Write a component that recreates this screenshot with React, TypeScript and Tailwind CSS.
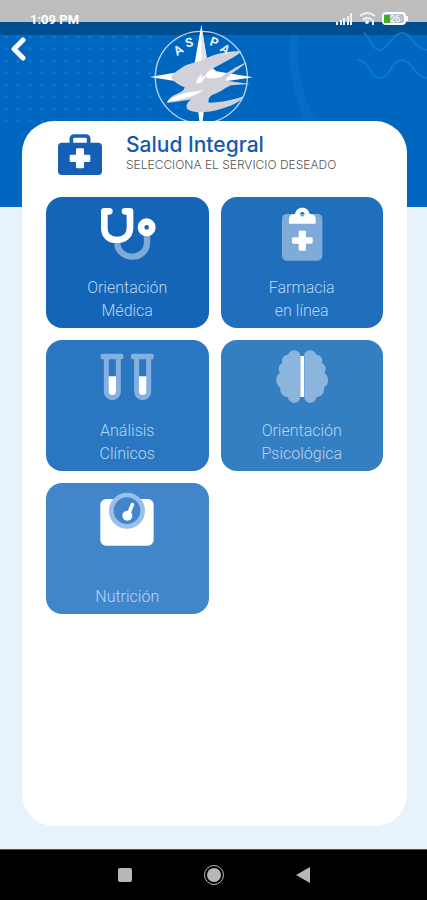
import type { ReactNode } from 'react'

interface Service {
  id: string
  lines: string[]
  color: string
  icon: ReactNode
}

const SERVICES: Service[] = [
  { id: 'medica', lines: ['Orientación', 'Médica'], color: 'bg-[#1465b8]', icon: <StethoscopeIcon /> },
  { id: 'farmacia', lines: ['Farmacia', 'en línea'], color: 'bg-[#1f6fbc]', icon: <ClipboardIcon /> },
  { id: 'analisis', lines: ['Análisis', 'Clínicos'], color: 'bg-[#2a76c0]', icon: <TubesIcon /> },
  { id: 'psicologica', lines: ['Orientación', 'Psicológica'], color: 'bg-[#347ec2]', icon: <BrainIcon /> },
  { id: 'nutricion', lines: ['Nutrición'], color: 'bg-[#4186ca]', icon: <ScaleIcon /> },
]

function StethoscopeIcon() {
  return (
    <svg viewBox="171 42 180 180" className="size-[60px]" fill="none" aria-hidden="true">
      <path d="M232 160c0 22 20 40 45 40s44-18 44-42v-22" stroke="#7ea9d8" strokeWidth="19" />
      <path
        d="M208 64h-15v50c0 24 16 36 37 36s40-12 40-36V64h-15"
        stroke="white"
        strokeWidth="20"
        strokeLinecap="round"
        strokeLinejoin="round"
      />
      <circle cx="320" cy="112" r="17" stroke="white" strokeWidth="20" />
    </svg>
  )
}

function ClipboardIcon() {
  return (
    <svg viewBox="168 42 180 180" className="size-[60px]" aria-hidden="true">
      <rect x="198" y="72" width="121" height="140" rx="14" fill="#7fabd9" />
      <path
        fill="white"
        fillRule="evenodd"
        d="M219 101V88q0-16 17-16h1c2-12 10-19 22-19s20 7 22 19h1q17 0 17 16v13zM259 66a7 7 0 1 0 0 14a7 7 0 1 0 0-14z"
      />
      <path
        fill="white"
        d="M252 122h14q4 0 4 4v16h16q4 0 4 4v11q0 4-4 4h-16v17q0 4-4 4h-14q-4 0-4-4v-17h-16q-4 0-4-4v-11q0-4 4-4h16v-16q0-4 4-4z"
      />
    </svg>
  )
}

function TubesIcon() {
  return (
    <svg viewBox="171 36 180 180" className="size-[60px]" aria-hidden="true">
      {[0, 91].map((x) => (
        <g key={x} transform={`translate(${x} 0)`}>
          <rect x="182" y="56" width="68" height="17" rx="5" fill="#84b1e0" />
          <path d="M199 68v102a18 18 0 0 0 36 0V68" fill="none" stroke="#84b1e0" strokeWidth="15" />
          <path d="M206 124h22v46q0 10-11 10t-11-10z" fill="white" />
        </g>
      ))}
    </svg>
  )
}

function BrainIcon() {
  const half =
    'M252 56c-8-15-31-14-36 3c-13 0-20 11-17 24c-12 7-14 21-7 31c-15 9-16 35 1 44c-2 15 7 27 22 28c4 20 31 25 37 4z'
  return (
    <svg viewBox="168 36 180 180" className="size-[60px]" fill="#8cb5de" aria-hidden="true">
      <path d={half} />
      <path d={half} transform="translate(517 0) scale(-1 1)" />
      <rect x="253" y="63" width="11" height="123" fill="white" />
    </svg>
  )
}

function ScaleIcon() {
  return (
    <svg viewBox="171 45 180 180" className="size-[60px]" aria-hidden="true">
      <rect x="181" y="72" width="160" height="140" rx="17" fill="white" />
      <circle cx="261" cy="107" r="47" fill="#4186ca" stroke="#9bbfe8" strokeWidth="14" />
      <path d="M264 121l13-32" stroke="white" strokeWidth="11" strokeLinecap="round" />
      <circle cx="262" cy="122" r="15" fill="white" />
    </svg>
  )
}

function MedkitIcon() {
  return (
    <svg viewBox="0 0 132 123" className="h-[41px] w-11 shrink-0" aria-hidden="true">
      <path d="M40 28V15q0-9 9-9h34q9 0 9 9v13" fill="none" stroke="#1560b5" strokeWidth="11" />
      <rect y="26" width="132" height="97" rx="12" fill="#1560b5" />
      <path
        fill="white"
        d="M58 43h16q4 0 4 4v15h15q4 0 4 4v14q0 4-4 4H78v15q0 4-4 4H58q-4 0-4-4V84H39q-4 0-4-4V66q0-4 4-4h15V47q0-4 4-4z"
      />
    </svg>
  )
}

function AspaLogo() {
  return (
    <svg viewBox="27 12 315 291" className="h-[97px] w-[105px]" role="img" aria-label="ASPA">
      <circle cx="184" cy="172" r="138" fill="none" stroke="#b9d3ee" strokeWidth="4" />
      {/* Compass star */}
      <path d="M184 14l19 118l26 22l110 18l-112 16l-28 20l-11 95h-10l-11-95l-30-20l-108-17l102-17l32-20z" fill="white" />
      <path d="M184 14l19 118l-19 8z" fill="#dfe2ea" />
      {/* Birds */}
      <g fill="#d0d1d9">
        <path d="M305 94C268 94 232 99 200 114C176 128 150 128 132 139C116 149 102 158 93 171C98 181 112 194 134 202C132 212 124 216 110 222C96 227 86 236 80 248C112 246 142 239 152 239C140 248 134 262 146 270C170 282 206 277 240 268C272 258 298 248 313 228C284 238 246 248 206 248C204 240 206 232 216 225C240 218 254 204 274 196L330 192L270 184L256 181C270 160 298 148 320 127C296 136 270 152 250 167C240 160 226 154 210 150C242 132 280 116 305 94Z" />
      </g>
      <path d="M172 176l14-17l-2 14l14 -8l-12 22l-18 4z" fill="white" />
      <path d="M210 151c16 2 30 8 40 16c-16 9-34 10-50 6c-8-4-2-14 10-22z" fill="white" />
      <path d="M82 246c20-24 66-30 108-35c-26 20-68 29-108 35z" fill="white" />
      <g fill="#e8f1fa" fontSize="38" textAnchor="middle" className="font-['Roboto',sans-serif] font-bold">
        <text transform="translate(122 101) rotate(-32)">A</text>
        <text transform="translate(151 80) rotate(-15)">S</text>
        <text transform="translate(219 79) rotate(18)">P</text>
        <text transform="translate(248 98) rotate(34)">A</text>
      </g>
    </svg>
  )
}

function HeroPattern() {
  return (
    <svg className="absolute inset-0 size-full" aria-hidden="true">
      <defs>
        <pattern id="dots" y="7" width="12" height="12" patternUnits="userSpaceOnUse">
          <circle cx="6" cy="6" r="2" fill="#0a73cb" />
        </pattern>
      </defs>
      <rect y="35" width="156" height="96" fill="url(#dots)" />
      <path d="M294 35c-3 32 4 62 19 92" fill="none" stroke="#056dc6" strokeWidth="9" />
    </svg>
  )
}

function Waves() {
  return (
    <svg
      viewBox="0 0 72 60"
      className="absolute top-6 right-0 h-[60px] w-[72px]"
      fill="none"
      stroke="#0a7ad0"
      strokeWidth="2"
      strokeLinecap="round"
      aria-hidden="true"
    >
      <path d="M9 9c6 4 8 17 16 17S37 9 47 9s12 16 25 17" />
      <path d="M3 36c11 0 12 18 22 18s12-18 22-18s12 17 25 18" />
    </svg>
  )
}

function StatusBar() {
  return (
    <div className="relative flex h-[35px] items-start justify-between bg-[linear-gradient(to_bottom,#bdbdbd_22px,#004f93_22px)] pt-3 pr-[19px] pl-[30px] font-['Roboto',sans-serif] text-white">
      <span className="text-[13px] leading-4 font-bold">1:09 PM</span>
      <div className="flex items-center gap-[6px]">
        <svg viewBox="0 0 17 12" className="h-3 w-[17px]" fill="#eef2f5" aria-hidden="true">
          <path d="M0 9h2v3H0zM4 7h2v5H4zM7 5h2v7H7zM11 3h2v9h-2zM14 0h2v12h-2z" />
        </svg>
        <svg viewBox="0 0 17 13" className="h-[13px] w-[17px]" fill="none" stroke="#eef2f5" strokeWidth="2" aria-hidden="true">
          <path d="M1 4q7-6 15 0M4 8q4-4 9 0" />
          <circle cx="8" cy="10" r="1" fill="#eef2f5" />
          <path d="M14 8v5" />
        </svg>
        <svg viewBox="0 0 26 13" className="h-[13px] w-[26px]" aria-hidden="true">
          <rect x="1" y="1" width="22" height="11" rx="3" fill="#b5c4cf" stroke="white" strokeWidth="2" />
          <path d="M24 4h2v5h-2z" fill="white" />
          <path d="M2 3h6v8H2z" fill="#3fae1e" />
          <text x="8" y="10" fontSize="9" fill="white">
            26
          </text>
        </svg>
      </div>
    </div>
  )
}

function ServiceCard({ service }: { service: Service }) {
  return (
    <button
      type="button"
      className={`flex h-[131px] cursor-pointer flex-col items-center justify-between rounded-2xl pt-[7px] pb-[6px] ${service.color}`}
    >
      {service.icon}
      <span className="font-['Roboto',sans-serif] text-base leading-[23px] font-light text-[#b9d6f2]">
        {service.lines.map((line) => (
          <span key={line} className="block">
            {line}
          </span>
        ))}
      </span>
    </button>
  )
}

export default function App() {
  return (
    <div className="flex min-h-screen flex-col bg-[#e8f2fb]">
      {/* Hero */}
      <header className="relative h-[207px] overflow-hidden bg-[#0067c0]">
        <HeroPattern />
        <StatusBar />
        <Waves />
        <button type="button" aria-label="Volver" className="relative ml-[10px] block cursor-pointer pt-[2px]">
          <svg viewBox="0 0 16 24" className="h-6 w-4" fill="none" stroke="white" strokeWidth="5" aria-hidden="true">
            <path d="M13 3L4 12l9 9" strokeLinecap="round" strokeLinejoin="round" />
          </svg>
        </button>
        <div className="absolute inset-x-0 top-6 flex justify-center pr-6">
          <AspaLogo />
        </div>
      </header>

      {/* Panel */}
      <main className="relative mr-5 -mt-[86px] mb-[23px] ml-[22px] flex-1 rounded-[32px] bg-white px-6 pt-3">
        <div className="flex items-start gap-6 pl-3">
          <div className="pt-px">
            <MedkitIcon />
          </div>
          <div>
            <h1 className="font-['Inter',sans-serif] text-[21px] leading-6 font-medium text-[#1459b0]">Salud Integral</h1>
            <p className="font-['Inter',sans-serif] text-xs leading-4 font-light text-[#555555]">
              SELECCIONA EL SERVICIO DESEADO
            </p>
          </div>
        </div>
        <div className="mt-[22px] grid grid-cols-2 gap-3">
          {SERVICES.map((service) => (
            <ServiceCard key={service.id} service={service} />
          ))}
        </div>
      </main>

      {/* System navigation */}
      <nav className="flex h-[51px] items-center justify-center gap-[72px] border-t border-[#555555] bg-black pl-px">
        <button type="button" aria-label="Recientes" className="size-[14px] rounded-[2px] bg-[#b8b8b8]" />
        <button type="button" aria-label="Inicio" className="flex size-5 items-center justify-center rounded-full border border-[#b8b8b8]">
          <span className="size-[14px] rounded-full bg-[#b8b8b8]" />
        </button>
        <button type="button" aria-label="Atrás">
          <svg viewBox="0 0 14 16" className="h-4 w-[14px]" fill="#b8b8b8" aria-hidden="true">
            <path d="M14 0v16L0 8z" />
          </svg>
        </button>
      </nav>
    </div>
  )
}
